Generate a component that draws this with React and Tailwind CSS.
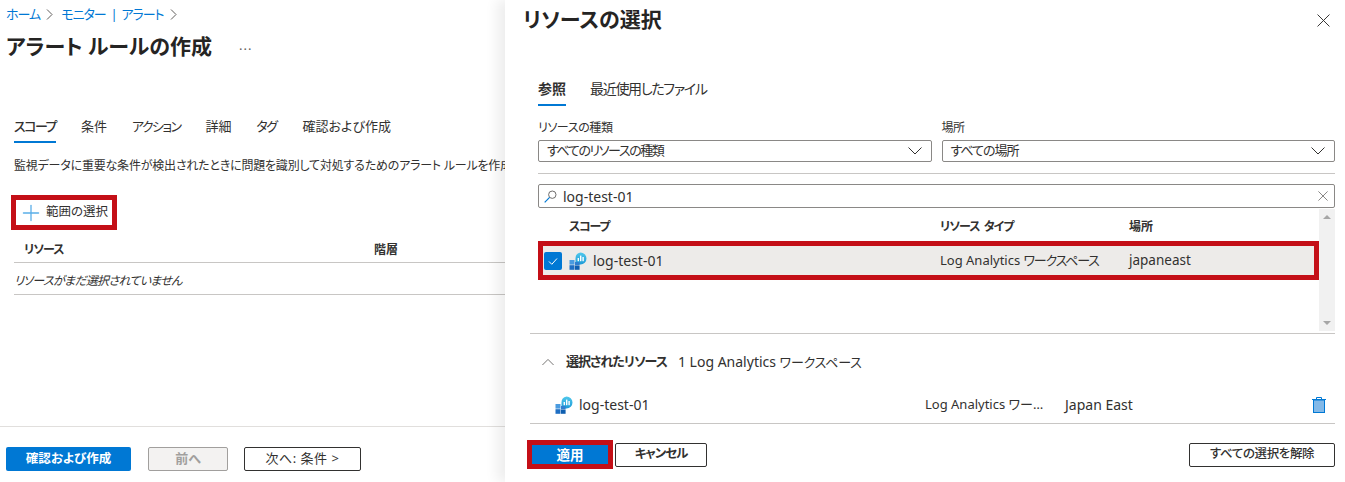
import { Plus } from 'lucide-react';

const font = "font-['Noto_Sans','Noto_Sans_CJK_JP',sans-serif] [font-feature-settings:'palt']";

function Chevron({ up, width = 14, className }) {
  return (
    <svg width={width} height="8" viewBox="0 0 14 8" className={className}>
      <path d={up ? 'M.5 7.5L7 1l6.5 6.5' : 'M.5.5L7 7 13.5.5'} fill="none" stroke="currentColor" strokeWidth="1" />
    </svg>
  );
}

function Caret({ className }) {
  return (
    <svg width="7" height="11" viewBox="0 0 7 11" className={className}>
      <path d="M1 .5l5 5-5 5" fill="none" stroke="currentColor" strokeWidth="1" />
    </svg>
  );
}

function Cross({ size, className }) {
  return (
    <svg width={size} height={size} viewBox="0 0 12 12" className={className}>
      <path d="M.5.5l11 11M11.5.5l-11 11" fill="none" stroke="currentColor" strokeWidth="0.9" />
    </svg>
  );
}

function SearchGlass() {
  return (
    <svg width="13" height="13" viewBox="0 0 13 13" className="shrink-0">
      <circle cx="8.3" cy="4.7" r="3.7" fill="none" stroke="#605e5c" strokeWidth="0.9" />
      <path d="M5.6 7.4L.7 12.3" fill="none" stroke="#0078d4" strokeWidth="1.2" />
    </svg>
  );
}

function WorkspaceIcon() {
  return (
    <svg width="18" height="18" viewBox="0 0 18 18" className="shrink-0">
      <defs>
        <linearGradient id="ws" x1="0" y1="0" x2="0" y2="1">
          <stop offset="0" stopColor="#50c8ec" />
          <stop offset="1" stopColor="#1e9bd7" />
        </linearGradient>
      </defs>
      <path d="M11.5 0.5a6 6 0 0 1 0 12H6.5v-6a6 6 0 0 1 5-6z" fill="url(#ws)" />
      <rect x="8.6" y="6" width="1.4" height="3.2" fill="#fff" />
      <rect x="11" y="3.6" width="1.4" height="5.6" fill="#fff" />
      <rect x="13.4" y="5" width="1.4" height="4.2" fill="#fff" />
      <rect x="0.5" y="8" width="5" height="4.6" fill="#4a9be0" />
      <rect x="6" y="10" width="4.6" height="3" fill="#2f7fd0" />
      <rect x="0.5" y="13.2" width="5" height="4.6" fill="#1f6fc4" />
      <rect x="6" y="13.4" width="4.6" height="4.4" fill="#0f5fb0" />
    </svg>
  );
}

function TrashIcon() {
  return (
    <svg width="14" height="16" viewBox="0 0 14 16" className="shrink-0">
      <rect x="1.5" y="3" width="11" height="12.5" fill="#83b9e8" stroke="#0078d4" />
      <path d="M0 2.5h14M4.5 2.5V.5h5v2" fill="none" stroke="#0078d4" />
    </svg>
  );
}

function SelectBox({ label, value, valueClass }) {
  return (
    <div className="flex-1 min-w-0">
      <div className="h-[23px] pt-[2px] text-[12px] leading-[18px] tracking-[-0.4px] text-[#323130]">{label}</div>
      <div className="h-[22px] flex items-center justify-between pl-2 pr-[9px] border border-[#8a8886] rounded-[2px] text-[13px] text-[#323130]">
        <span className={valueClass}>{value}</span>
        <Chevron />
      </div>
    </div>
  );
}

function LeftPanel() {
  return (
    <div className="w-[505px] h-[482px] shrink-0 flex flex-col overflow-hidden">
      <div className="h-[28px] pl-[6px] pt-[1px] flex items-center gap-[6px] text-[13px] tracking-[-1px] text-[#0078d4]">
        <span>ホーム</span>
        <Caret className="text-[#605e5c]" />
        <span className="ml-[2px] whitespace-pre">モニター  |  アラート</span>
        <Caret className="text-[#605e5c]" />
      </div>
      <div className="h-[36px] pl-[6px] flex items-center text-[#252423]">
        <h1 className="text-[21px] font-semibold leading-[36px] whitespace-nowrap">アラート ルールの作成</h1>
        <span className="ml-[27px] text-[13px] text-[#605e5c] tracking-[1px]">...</span>
      </div>
      <div className="mt-[46px] ml-[14px] flex h-[33px] text-[13px] text-[#323130] items-start">
        <div className="h-[33px] pt-[7px] leading-[19px] border-b-[2px] border-[#0078d4] font-medium tracking-[-1.5px]">スコープ</div>
        <div className="ml-[25px] pt-[7px] leading-[19px]">条件</div>
        <div className="ml-[25px] pt-[7px] leading-[19px] tracking-[-1.6px]">アクション</div>
        <div className="ml-[25px] pt-[7px] leading-[19px]">詳細</div>
        <div className="ml-[25px] pt-[7px] leading-[19px] tracking-[-1.5px]">タグ</div>
        <div className="ml-[26px] pt-[7px] leading-[19px]">確認および作成</div>
      </div>
      <p className="ml-[14px] mt-[13px] h-[20px] text-[12px] leading-[20px] tracking-[-0.2px] text-[#323130] whitespace-nowrap">
        監視データに重要な条件が検出されたときに問題を識別して対処するためのアラート ルールを作成します。
      </p>
      <div className="mt-[19px] ml-[11px] w-[106px] h-[35px] border-[5px] border-[#c40f17] flex items-center pl-[2px] gap-[2px] text-[12.5px] text-[#323130]">
        <Plus size={26} strokeWidth={1.2} className="text-[#5aaee8]" />
        <span>範囲の選択</span>
      </div>
      <div className="ml-[14px] h-[33px] pt-[8px] flex items-center border-b border-[#c8c6c4] text-[12px] font-semibold text-[#323130]">
        <span className="w-[360px] pl-[10px] tracking-[-1px]">リソース</span>
        <span>階層</span>
      </div>
      <div className="ml-[14px] h-[32px] pt-[4px] flex items-center border-b border-[#c8c6c4] text-[12px] italic tracking-[-0.7px] text-[#323130]">
        リソースがまだ選択されていません
      </div>
      <div className="flex-1" />
      <div className="h-[56px] border-t border-[#e1dfdd] pl-[6px] pt-[20px] flex items-start text-[13px]">
        <button className="w-[125px] h-[24px] rounded-[2px] bg-[#0078d4] text-white text-[12.5px] font-semibold">確認および作成</button>
        <button className="ml-[17px] w-[80px] h-[24px] rounded-[2px] border border-[#a19f9d] bg-[#f3f2f1] text-[#a19f9d] font-semibold">前へ</button>
        <button className="ml-[16px] w-[117px] h-[24px] rounded-[2px] border border-[#323130] text-[#323130] tracking-[0.5px]">次へ: 条件 &gt;</button>
      </div>
    </div>
  );
}

function RightPanel() {
  return (
    <div className="flex-1 min-w-0 h-[482px] flex flex-col bg-white shadow-[-8px_0_12px_rgba(0,0,0,0.07)] z-10">
      <div className="h-[40px] pl-[18px] pr-[15px] flex items-center justify-between">
        <h2 className="text-[21px] font-semibold text-[#252423]">リソースの選択</h2>
        <Cross size={13} className="text-[#323130]" />
      </div>
      <div className="ml-[33px] mt-[36px] h-[31px] flex text-[#323130]">
        <div className="h-[30px] pt-[3px] text-[14px] leading-[19px] border-b-[2px] border-[#0078d4] font-semibold">参照</div>
        <div className="ml-[24px] pt-[3px] text-[14px] leading-[19px] tracking-[-1.3px]">最近使用したファイル</div>
      </div>
      <div className="ml-[33px] mr-[10px] mt-[10px] flex gap-[10px]">
        <SelectBox label="リソースの種類" value="すべてのリソースの種類" valueClass="tracking-[-1.4px]" />
        <SelectBox label="場所" value="すべての場所" valueClass="tracking-[-1px]" />
      </div>
      <div className="ml-[33px] mr-[10px] mt-[11px] border-t border-[#c8c6c4]" />
      <div className="ml-[33px] mr-[10px] mt-[10px] h-[24px] flex items-center justify-between pl-[5px] pr-[6px] border border-[#8a8886] rounded-[2px] text-[14px] text-[#323130]">
        <div className="flex items-center gap-[6px]">
          <SearchGlass />
          <span>log-test-01</span>
        </div>
        <Cross size={10} className="text-[#605e5c]" />
      </div>
      <div className="ml-[33px] mr-[10px] mt-[1px] h-[122px] flex">
        <div className="flex-1 min-w-0">
          <div className="h-[32px] pt-[3px] flex items-center text-[12px] font-semibold text-[#323130]">
            <span className="w-[402px] pl-[31px] tracking-[-1.2px]">スコープ</span>
            <span className="w-[189px] tracking-[-1px] whitespace-pre">リソース  タイプ</span>
            <span>場所</span>
          </div>
          <div className="h-[39px] border-[5px] border-[#c40f17] bg-[#edebe9] flex items-center text-[13px] text-[#323130]">
            <span className="ml-[1px] w-[18px] h-[18px] rounded-[2px] bg-[#0078d4] flex items-center justify-center">
              <svg width="12" height="12" viewBox="0 0 12 12"><path d="M2 6.5l2.8 2.8L10 3.5" fill="none" stroke="#fff" strokeWidth="1" /></svg>
            </span>
            <span className="ml-[7px]"><WorkspaceIcon /></span>
            <span className="ml-[6px] w-[347px] text-[14px]">log-test-01</span>
            <span className="w-[189px]">Log Analytics <span className="tracking-[-1.2px]">ワークスペース</span></span>
            <span className="text-[13.5px]">japaneast</span>
          </div>
        </div>
        <div className="w-[16px] bg-[#f1f1f1] flex flex-col items-center justify-between py-[6px]">
          <span className="w-0 h-0 border-x-[4px] border-x-transparent border-b-[4px] border-b-[#a6a6a6]" />
          <span className="w-0 h-0 border-x-[4px] border-x-transparent border-t-[4px] border-t-[#a6a6a6]" />
        </div>
      </div>
      <div className="ml-[25px] mr-[10px] mt-[2px] border-t border-[#c8c6c4]" />
      <div className="ml-[37px] mt-[18px] h-[20px] flex items-center text-[13px] text-[#323130]">
        <Chevron up width={12} className="text-[#605e5c]" />
        <span className="ml-[12px] font-semibold tracking-[-1px]">選択されたリソース</span>
        <span className="ml-[11px] text-[14px]">1 Log Analytics <span className="text-[13px] tracking-[-0.2px]">ワークスペース</span></span>
      </div>
      <div className="ml-[25px] mr-[10px] mt-[22px] h-[30px] pb-[8px] flex items-center border-b border-[#c8c6c4] text-[13px] text-[#323130]">
        <span className="ml-[25px]"><WorkspaceIcon /></span>
        <span className="ml-[6px] w-[346px] text-[14px]">log-test-01</span>
        <span className="w-[140px] whitespace-nowrap">Log Analytics <span>ワー…</span></span>
        <span className="w-[247px] text-[14px]">Japan East</span>
        <TrashIcon />
      </div>
      <div className="ml-[22px] mr-[10px] mt-[16px] flex items-center text-[12.5px] font-semibold">
        <div className="border-[5px] border-[#c40f17] w-[86px] h-[29px]">
          <button className="w-full h-full pb-[2px] bg-[#0078d4] text-white text-[13.5px] font-semibold">適用</button>
        </div>
        <button className="ml-[2px] w-[92px] h-[24px] rounded-[2px] border border-[#323130] text-[#323130] tracking-[-1px]">キャンセル</button>
        <div className="flex-1" />
        <button className="w-[146px] h-[24px] rounded-[2px] border border-[#323130] text-[#323130] font-medium tracking-[-0.4px]">すべての選択を解除</button>
      </div>
    </div>
  );
}

export default function App() {
  return (
    <div className={`w-[1345px] h-[482px] flex overflow-hidden bg-white ${font}`}>
      <LeftPanel />
      <RightPanel />
    </div>
  );
}
